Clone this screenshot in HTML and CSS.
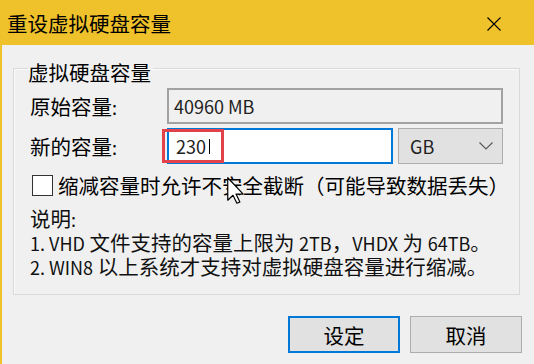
FILE: index.html
```html
<!DOCTYPE html>
<html lang="zh-CN">
	<head>
		<meta charset="utf-8" />
		<title>重设虚拟硬盘容量</title>
		<link rel="stylesheet" href="styles.css">
	</head>
	<body>
        <div class="window">
            <div class="titlebar">
                <span class="title">重设虚拟硬盘容量</span>
                <svg class="close" width="14" height="14" viewBox="0 0 14 14">
                    <path d="M0.5 0.5 L13.5 13.5 M13.5 0.5 L0.5 13.5" stroke="#000" stroke-width="1.1" fill="none"/>
                </svg>
            </div>
            <div class="content">
                <fieldset class="group">
                    <legend>虚拟硬盘容量</legend>
                    <div class="form">
                        <span class="field-label">原始容量<span class="en">:</span></span>
                        <div class="readonly"><span class="en">40960 MB</span></div>
                        <span class="field-label">新的容量<span class="en">:</span></span>
                        <div class="size-row">
                            <div class="size-input"><span class="en">230</span><span class="caret"></span></div>
                            <div class="combo">
                                <span class="en">GB</span>
                                <svg width="14" height="8" viewBox="0 0 14 8">
                                    <polyline points="0.5,0.5 7,7 13.5,0.5" stroke="#5a5a5a" stroke-width="1.2" fill="none"/>
                                </svg>
                            </div>
                            <div class="highlight"></div>
                        </div>
                    </div>
                    <label class="check-row"><span class="checkbox"></span>缩减容量时允许不安全截断（可能导致数据丢失）</label>
                    <div class="notes">
                        <p>说明<span class="en">:</span></p>
                        <p><span class="en">1. VHD</span> 文件支持的容量上限为 <span class="en">2TB</span>，<span class="en">VHDX</span> 为 <span class="en">64TB</span>。</p>
                        <p><span class="en">2. WIN8</span> 以上系统才支持对虚拟硬盘容量进行缩减。</p>
                    </div>
                </fieldset>
                <div class="buttons">
                    <button type="button" class="btn btn-default">设定</button>
                    <button type="button" class="btn">取消</button>
                </div>
            </div>
            <svg class="pointer" width="18" height="27" viewBox="0 0 12 18">
                <path d="M0.5 0.5 L0.5 15.5 L4 12.2 L6.6 17.5 L8.6 16.6 L6 11.4 L10.8 11.4 Z" fill="#fff" stroke="#000" stroke-width="0.8" stroke-linejoin="round"/>
            </svg>
        </div>
	</body>
</html>
```

FILE: styles.css
```css
:root {
    --font-family: "Noto Sans CJK SC", "Noto Sans", sans-serif;
    --accent: #efc12b;
}

body {
    margin: 0;
    padding: 0;
    font-family: var(--font-family);
    font-size: 20.5px;
    color: #000;
    background-color: #f0f0f0;
}

p {
    margin: 0;
    white-space: nowrap;
}

/* latin runs render smaller than the cjk glyphs, like the system ui font */
.en {
    font-size: 18px;
}

.window {
    position: relative;
    width: 534px;
    height: 364px;
    box-sizing: border-box;
    border-left: 2px solid var(--accent);
    background-color: #f0f0f0;
    overflow: hidden;
}

.titlebar {
    display: flex;
    justify-content: space-between;
    align-items: center;
    height: 45px;
    padding: 0 33px 0 5px;
    margin-left: -2px;
    background-color: var(--accent);
}

.title {
    line-height: 24px;
    padding-left: 2px;
}

.close {
    display: block;
    margin-top: 2px;
}

.content {
    padding: 0 12px 0 11px;
}

.group {
    margin: 9px 0 0 0;
    width: 507px;
    min-width: 0;
    box-sizing: border-box;
    padding: 6px 16px 15px 16px;
    border: 1px solid #d9d9d9;
    box-shadow: inset 1px 1px 0 #fbfbfb;
}

.group legend {
    margin-left: -2px;
    padding: 8px 2px 0 0;
    line-height: 20px;
}

.form {
    display: grid;
    grid-template-columns: 137px 1fr;
    grid-auto-rows: 36px;
    row-gap: 4px;
    align-items: center;
}

.field-label {
    line-height: 24px;
}

.readonly {
    height: 36px;
    box-sizing: border-box;
    border: 2px solid #a2a2a2;
    padding-left: 5px;
    display: flex;
    align-items: center;
    color: #222;
}

.size-row {
    position: relative;
    display: flex;
    gap: 5px;
    height: 36px;
}

.size-input {
    flex: 1;
    box-sizing: border-box;
    border: 2px solid #0078d7;
    background-color: #fff;
    padding-left: 7px;
    display: flex;
    align-items: center;
    color: #222;
}

.caret {
    width: 1px;
    height: 15px;
    margin-left: 3px;
    background-color: #000;
}

.combo {
    width: 105px;
    box-sizing: border-box;
    border: 1px solid #adadad;
    background-color: #e1e1e1;
    padding: 0 9px 0 11px;
    display: flex;
    align-items: center;
    justify-content: space-between;
    color: #222;
}

.highlight {
    position: absolute;
    left: -5px;
    top: 1px;
    width: 62px;
    height: 34px;
    box-sizing: border-box;
    border: 3px solid #e2434a;
}

.check-row {
    display: flex;
    align-items: center;
    gap: 5px;
    height: 24px;
    margin: 9px 0 0 2px;
    line-height: 24px;
    white-space: nowrap;
}

.checkbox {
    flex: none;
    width: 21px;
    height: 21px;
    box-sizing: border-box;
    border: 1px solid #333;
    background-color: #fff;
}

.notes {
    margin-top: 10px;
    line-height: 23px;
    color: #111;
}

.buttons {
    display: flex;
    justify-content: flex-end;
    gap: 10px;
    margin-top: 21px;
}

.btn {
    width: 112px;
    height: 37px;
    box-sizing: border-box;
    border: 1px solid #adadad;
    background-color: #e1e1e1;
    font-family: var(--font-family);
    font-size: 20.5px;
    color: #000;
    padding: 0;
}

.btn-default {
    border: 2px solid #0078d7;
}

.pointer {
    position: absolute;
    left: 225px;
    top: 177px;
}
```
